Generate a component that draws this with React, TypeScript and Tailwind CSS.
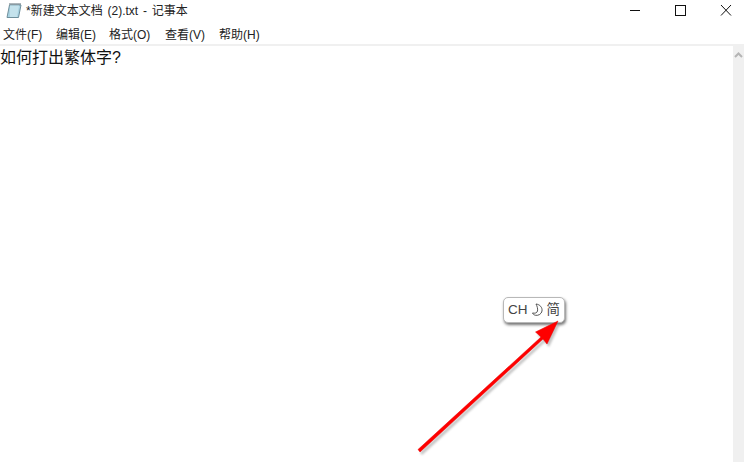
const font = { fontFamily: '"Liberation Sans", "Noto Sans CJK SC", sans-serif' };

const menus = [
  { label: "文件(F)", w: "w-[53px]" },
  { label: "编辑(E)", w: "w-[53px]" },
  { label: "格式(O)", w: "w-[56px]" },
  { label: "查看(V)", w: "w-[54px]" },
  { label: "帮助(H)", w: "w-[54px]" },
];

function NotepadIcon() {
  return (
    <svg width="16" height="17" viewBox="0 0 16 17" className="shrink-0">
      <path d="M3.5 3 H15 L12.5 15.5 H1 Z" fill="#a9d3e2" stroke="#6f8f9c" strokeWidth="1" />
      <path d="M4 3.5 H13 L11 15 H4 Z" fill="#c4e2ec" />
      <path d="M4 1 V3 M6 1 V3 M8 1 V3 M10 1 V3 M12 1 V3 M14 1 V3" stroke="#5c6f78" strokeWidth="1" />
    </svg>
  );
}

export default function App() {
  return (
    <div className="relative w-[744px] h-[462px] overflow-hidden bg-white flex flex-col text-[#1a1a1a]" style={font}>
      {/* 标题栏 */}
      <header className="h-[21px] flex items-center shrink-0">
        <div className="ml-[6px] flex items-center">
          <NotepadIcon />
          <span className="ml-[4px] text-[12px] leading-none text-[#222] [word-spacing:1.5px]">*新建文本文档 (2).txt - 记事本</span>
        </div>
        <div className="ml-auto flex items-center">
          <svg width="124" height="21" viewBox="0 0 124 21" className="block">
            <path d="M10 10.5 H20" stroke="#111" strokeWidth="1" />
            <rect x="55.5" y="5.5" width="10" height="10" fill="none" stroke="#111" strokeWidth="1" />
            <path d="M101 5 L111 15.5 M111 5 L101 15.5" stroke="#111" strokeWidth="1" />
          </svg>
        </div>
      </header>

      {/* 菜单栏 */}
      <nav className="h-[23px] flex items-center pl-[3px] pt-[4px] shrink-0 text-[12px] leading-none text-[#222]">
        {menus.map((m) => (
          <span key={m.label} className={m.w}>
            {m.label}
          </span>
        ))}
      </nav>

      <div className="h-[2px] bg-[#f0f0f0] shrink-0" />

      {/* 编辑区 */}
      <main className="flex-1 flex min-h-0">
        <div className="flex-1 text-[16px] leading-[22px] mt-[1px] text-[#111]">如何打出繁体字?</div>
        <div className="w-[11px] bg-[#f0f0f0] flex justify-center pt-[6px]">
          <svg width="9" height="6" viewBox="0 0 9 6">
            <path d="M1 5 L4.5 1.5 L8 5" fill="none" stroke="#b5b5b5" strokeWidth="2" />
          </svg>
        </div>
      </main>

      {/* 输入法提示 */}
      <div className="absolute left-[503px] top-[297px] w-[62px] h-[26px] bg-white border border-[#b8b8b8] rounded-[5px] shadow-[1px_2px_3px_rgba(0,0,0,0.55)] flex items-center justify-center gap-[3px] text-[13.5px] leading-none text-[#444]">
        <span>CH</span>
        <svg width="13" height="14" viewBox="0 0 13 14">
          <path d="M5 1 C9 1.5 11.5 4.5 11 8 C10.5 11 7.5 12.8 4.5 12.3 C3 12 2 11.2 1.5 10 C4 10.5 6 10 6.5 8 C7 5.5 6 3 5 1 Z" fill="none" stroke="#444" strokeWidth="0.9" />
        </svg>
        <span>简</span>
      </div>

      {/* 红色箭头 */}
      <svg width="744" height="462" viewBox="0 0 744 462" className="absolute left-0 top-0 pointer-events-none">
        <g fill="#7a7a7a" opacity="0.45" transform="translate(2 3)" style={{ filter: "blur(1px)" }}>
          <path d="M418 449.5 L541 337 L535.5 332 L558 321 L547 344 L543 339 L420 452 Z" />
        </g>
        <path d="M418 449.5 L541 337 L535.5 332 L558 321 L547 344 L543 339 L420 452 Z" fill="#ff0000" stroke="#e60000" strokeWidth="0.5" />
      </svg>
    </div>
  );
}
